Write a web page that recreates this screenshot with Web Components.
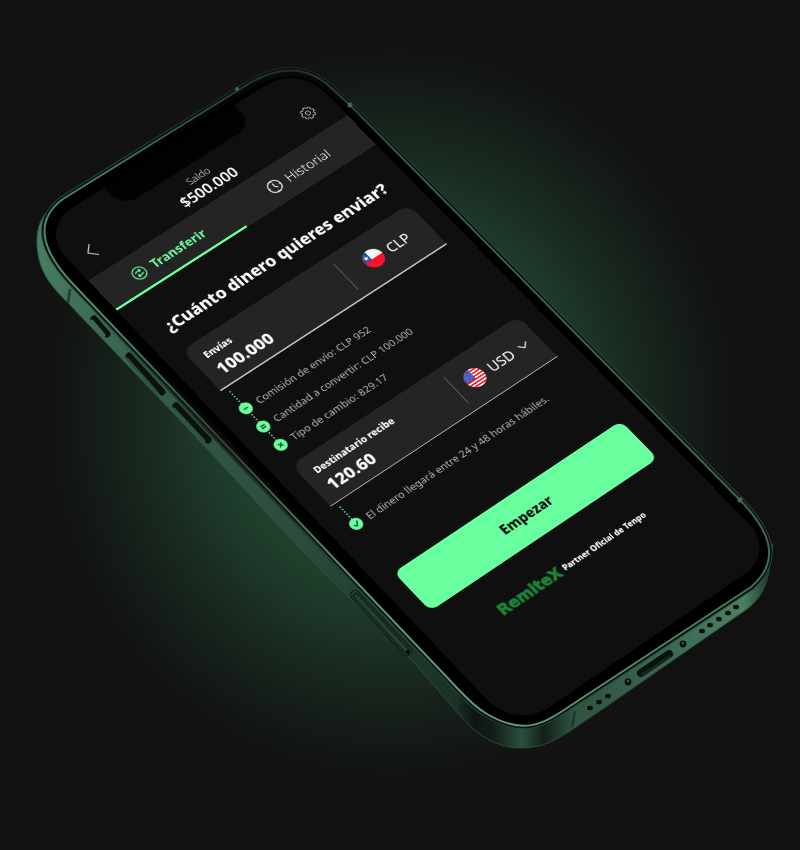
<!DOCTYPE html>
<html lang="es">
<head>
<meta charset="utf-8">
<meta name="viewport" content="width=device-width, initial-scale=1">
<title>Remesas</title>
<style>
  body { margin: 0; background: #111; font-family: "Noto Sans", "Open Sans", sans-serif; }
</style>
</head>
<body>
<phone-stage>
  <phone-body></phone-body>
  <tilted-plane corners="39,229 298,65 777,552 516,730">
    <app-screen>
      <app-header slot="header" label="Saldo" amount="$500.000"></app-header>
      <app-tabs slot="tabs"></app-tabs>
      <h1 slot="title">¿Cuánto dinero quieres enviar?</h1>
      <money-card label="Envías" amount="100.000" line="2px">
        <flag-icon slot="flag" country="cl"></flag-icon>
        <span slot="currency">CLP</span>
      </money-card>
      <step-list>
        <step-item icon="minus">Comisión de envío: CLP 952</step-item>
        <step-item icon="equal">Cantidad a convertir: CLP 100.000</step-item>
        <step-item icon="times">Tipo de cambio: 829.17</step-item>
      </step-list>
      <money-card label="Destinatario recibe" amount="120.60" line="1px">
        <flag-icon slot="flag" country="us"></flag-icon>
        <currency-select slot="currency"></currency-select>
      </money-card>
      <step-list>
        <step-item icon="check">El dinero llegará entre 24 y 48 horas hábiles.</step-item>
      </step-list>
      <main-button slot="action">Empezar</main-button>
      <partner-line slot="footer">Partner Oficial de Tenpo</partner-line>
    </app-screen>
  </tilted-plane>
</phone-stage>

<script>
function define(name, html, extra) {
  const t = document.createElement('template');
  t.innerHTML = html;
  customElements.define(name, class extends HTMLElement {
    constructor() {
      super();
      this.attachShadow({ mode: 'open' }).append(t.content.cloneNode(true));
    }
    connectedCallback() { if (extra) extra(this, this.shadowRoot); }
  });
}

/* Backdrop with the green glow; its box keeps the scene's proportions. */
define('phone-stage', `<style>
  :host { display: block; position: relative; width: 100%; aspect-ratio: 800 / 850; overflow: hidden;
    background: radial-gradient(ellipse 46% 46% at 49% 48.5%, #24523a 0%, #21432f 40%, #1d3728 54%, #192a20 66%, #151d18 80%, #121412 92%, #111 100%); }
</style><slot></slot>`);

/* Metal frame, side keys, ports and the black glass. */
define('phone-body', `<style>
  :host { display: block; position: absolute; inset: 0; }
  svg { display: block; width: 100%; height: 100%; }
</style>
<svg viewBox="0 0 800 850" aria-hidden="true">
  <defs>
    <linearGradient id="side" gradientUnits="userSpaceOnUse" x1="36" y1="0" x2="772" y2="0">
      <stop offset="0" stop-color="#487e60"/><stop offset=".06" stop-color="#3f7055"/>
      <stop offset=".2" stop-color="#315944"/>
      <stop offset=".36" stop-color="#2b4c3b"/><stop offset=".5" stop-color="#1f382b"/>
      <stop offset=".57" stop-color="#1c3127"/><stop offset=".595" stop-color="#0e1512"/>
      <stop offset=".62" stop-color="#121d18"/><stop offset=".66" stop-color="#2c4f3c"/>
      <stop offset=".69" stop-color="#141f19"/><stop offset=".73" stop-color="#2f5440"/>
      <stop offset=".85" stop-color="#396550"/><stop offset=".96" stop-color="#4b8163"/>
      <stop offset="1" stop-color="#1c3226"/>
    </linearGradient>
    <linearGradient id="rim" gradientUnits="userSpaceOnUse" x1="250" y1="560" x2="480" y2="240">
      <stop offset="0" stop-color="#5f9a79"/><stop offset=".35" stop-color="#528868"/>
      <stop offset="1" stop-color="#355d46"/>
    </linearGradient>
    <linearGradient id="fade" gradientUnits="userSpaceOnUse" x1="120" y1="130" x2="420" y2="180">
      <stop offset="0" stop-color="#111" stop-opacity="0"/><stop offset=".5" stop-color="#111" stop-opacity=".6"/>
      <stop offset="1" stop-color="#111" stop-opacity="0"/>
    </linearGradient>
    <path id="face" d="M63 199 L250 83 C276 68 304 64 329 86 L350 105 L740 500 C774 535 779 563 751 587 L573 704 C541 726 523 735 487 714 Q475 707 460 691 L73 284 C38 247 36 219 63 199Z"/>
  </defs>
  <path fill="url(#side)" stroke="#2c4a3a" stroke-width="1" d="M60 200 C40 214 36 228 37 247 C39 272 50 285 67 302 L177 417 L300 549 L410 658 L457 712 C478 736 496 748 522 748 C545 747 556 740 570 731 L607 706 L740 614 C761 601 768 585 770 563 L773 545 L740 520 L520 720 L80 290Z"/>
  <use href="#face" fill="none" stroke="#274637" stroke-width="7"/>
  <use href="#face" fill="none" stroke="#08100c" stroke-width="5"/>
  <use href="#face" fill="#000" stroke="url(#rim)" stroke-width="2"/>
  <use href="#face" fill="none" stroke="url(#fade)" stroke-width="10"/>
  <g fill="none" stroke="#1d3327" stroke-width="3">
    <path d="M70 289L68 303M575 711L572 727M458 697L456 710" opacity=".8"/>
  </g>
  <g fill="#3f6b53"><circle cx="237" cy="89" r="2"/><circle cx="350" cy="105" r="2.500"/><circle cx="740" cy="500" r="2.500"/></g>
  <g fill="none" stroke-linecap="round">
    <path stroke="#0a120e" stroke-width="7" d="M94 319L107 334"/>
    <path stroke="#3c6b51" stroke-width="3" d="M92 321L104 335"/>
    <path stroke="#0a120e" stroke-width="7" d="M129 356L162 392M176 406L208 440"/>
    <path stroke="#2d5240" stroke-width="3" d="M127 359L158 394M174 409L204 441"/>
    <path stroke="#0d1812" stroke-width="10" d="M355 595L407 651"/>
    <path stroke="#244033" stroke-width="8" d="M355 595L407 651"/>
    <path stroke="#0d1812" stroke-width="6" d="M356 596L406 650"/>
    <path stroke="#244033" stroke-width="4" d="M356 596L406 650"/>
    <path stroke="#0a120e" stroke-width="8" d="M641 673L669 654"/>
    <path stroke="#16251d" stroke-width="3" d="M642 675L669 657"/>
  </g>
  <circle cx="408" cy="652" r="2" fill="#050806"/>
  <g fill="#08100c">
    <ellipse cx="590" cy="708" rx="3" ry="2.3"/><ellipse cx="599" cy="702" rx="3" ry="2.3"/><ellipse cx="608" cy="696" rx="3" ry="2.3"/>
    <circle cx="628" cy="682" r="3.4"/><circle cx="683" cy="644" r="3.4"/>
    <ellipse cx="702" cy="631" rx="3" ry="2.3"/><ellipse cx="710" cy="625" rx="3" ry="2.3"/><ellipse cx="719" cy="619" rx="3" ry="2.3"/><ellipse cx="728" cy="613" rx="3" ry="2.3"/><ellipse cx="736" cy="607" rx="3" ry="2.3"/>
  </g>
  <g fill="#3b654f"><circle cx="628" cy="681" r="1.2"/><circle cx="683" cy="643" r="1.2"/></g>
</svg>`);

/* Lays its content on a plane seen in perspective. The corners (top left,
   top right, bottom right, bottom left) are given on the 800-wide stage. */
define('tilted-plane', `<style>
  :host { display: block; position: absolute; left: 0; top: 0; width: 390px; height: 844px; transform-origin: 0 0; }
</style><slot></slot>`, (el) => {
  const place = () => {
    const k = el.parentElement.clientWidth / 800;
    const [p0, p1, p2, p3] = el.getAttribute('corners').split(' ').map(p => p.split(',').map(n => n * k));
    const dx1 = p1[0] - p2[0], dx2 = p3[0] - p2[0], sx = p0[0] - p1[0] + p2[0] - p3[0];
    const dy1 = p1[1] - p2[1], dy2 = p3[1] - p2[1], sy = p0[1] - p1[1] + p2[1] - p3[1];
    const det = dx1 * dy2 - dx2 * dy1;
    const g = (sx * dy2 - dx2 * sy) / det, h = (dx1 * sy - sx * dy1) / det;
    const w = 390, t = 844;
    el.style.transform = `matrix3d(${[
      (p1[0] - p0[0] + g * p1[0]) / w, (p1[1] - p0[1] + g * p1[1]) / w, 0, g / w,
      (p3[0] - p0[0] + h * p3[0]) / t, (p3[1] - p0[1] + h * p3[1]) / t, 0, h / t,
      0, 0, 1, 0, p0[0], p0[1], 0, 1].map(n => n.toFixed(9)).join(',')})`;
  };
  place();
  new ResizeObserver(place).observe(el.parentElement);
});

define('app-screen', `<style>
  :host { display: flex; flex-direction: column; height: 100%; box-sizing: border-box; position: relative;
    overflow: hidden; border-radius: 48px; background: #0f0f0f; color: #fff; }
  .notch { position: absolute; left: 50%; top: 0; width: 196px; height: 34px; margin-left: -98px;
    background: #020202; border-radius: 0 0 22px 22px; }
  .body { display: flex; flex-direction: column; padding: 0 25px; }
  ::slotted(h1) { margin: 38px 0 21px; font-size: 21px; line-height: 28px; font-weight: 800; text-align: center; white-space: nowrap; }
</style>
<div class="notch"></div>
<slot name="header"></slot><slot name="tabs"></slot>
<div class="body"><slot name="title"></slot><slot></slot><slot name="action"></slot><slot name="footer"></slot></div>`);

define('app-header', `<style>
  :host { display: grid; grid-template-columns: 56px 1fr 56px; height: 90px; align-items: end; }
  button { all: unset; height: 60px; display: grid; place-items: center; }
  button:last-of-type { padding-right: 14px; }
  svg { width: 20px; height: 20px; fill: none; stroke: #ddd; stroke-width: 1; }
  .mid { display: flex; flex-direction: column; align-items: center; padding-bottom: 6px; }
  .label { font-size: 13px; line-height: 16px; font-weight: 300; color: #ddd; }
  .amount { font-size: 19px; line-height: 24px; font-weight: 600; }
</style>
<button aria-label="Volver"><svg viewBox="0 0 20 20"><path stroke-width="1.3" d="M15 1L6 10L15 19"/></svg></button>
<div class="mid"><span class="label"></span><span class="amount"></span></div>
<button aria-label="Ajustes"><svg viewBox="0 0 20 20"><circle cx="10" cy="10" r="3"/><path d="M8.6 1.5h2.8l.6 2.1 1.2.5 1.9-1.1 2 2-1.1 1.9.5 1.2 2.1.6v2.6l-2.1.6-.5 1.2 1.1 1.9-2 2-1.9-1.1-1.2.5-.6 2.1H8.6L8 16.400l-1.2-.5L4.900 17l-2-2L4 13.100l-.5-1.200-2.100-.6V8.700l2.100-.6.5-1.200L2.900 5l2-2 1.900 1.100L8 3.600z" stroke-linejoin="round"/></svg></button>`,
(el, r) => {
  r.querySelector('.label').textContent = el.getAttribute('label');
  r.querySelector('.amount').textContent = el.getAttribute('amount');
});

define('app-tabs', `<style>
  :host { display: grid; grid-template-columns: 1fr 1fr; height: 52px; background: #242424; }
  button { all: unset; box-sizing: border-box; display: flex; justify-content: center; align-items: center; gap: 8px; padding-top: 4px;
    font-size: 17px; line-height: 22px; font-weight: 300; color: #fff; border-bottom: 3px solid transparent; }
  .on { color: #69ff9f; font-size: 16px; font-weight: 700; border-color: #69ff9f; }
  svg { width: 20px; height: 20px; fill: none; stroke: currentColor; stroke-width: 1.4; }
</style>
<button class="on" role="tab" aria-selected="true"><svg viewBox="0 0 20 20"><circle cx="10" cy="10" r="8.500"/><path d="M6 9q0-2 2-2h5M11 4.800L13.300 7L11 9.200M14 11q0 2-2 2H7M9 10.800L6.700 13L9 15.200"/></svg>Transferir</button>
<button role="tab" aria-selected="false"><svg viewBox="0 0 20 20"><circle cx="10" cy="10" r="8.500"/><path d="M10 5v5l3 3M10 2v1.500M10 16.500V18M2 10h1.500M16.500 10H18"/></svg>Historial</button>`);

define('money-card', `<style>
  :host { display: grid; grid-template-columns: 1fr 124px; height: 70px; box-sizing: border-box;
    background: #242424; border-radius: 14px 14px 0 0; border-bottom: var(--line, 1px) solid #bbb; }
  label { display: flex; flex-direction: column; justify-content: center; gap: 1px; padding: 5px 0 0 16px; font-size: 12px; line-height: 18px; font-weight: 800; min-width: 0; }
  input { all: unset; width: 100%; font-size: 21px; line-height: 28px; height: 28px; font-weight: 800; color: #fff; }
  .cur { display: flex; align-items: center; justify-content: center; gap: 8px; align-self: center; height: 44px;
    border-left: 1px solid #666; font-size: 18px; line-height: 24px; font-weight: 400; }
</style>
<label><span></span><input type="text" inputmode="decimal"></label>
<div class="cur"><slot name="flag"></slot><slot name="currency"></slot></div>`,
(el, r) => {
  el.style.setProperty('--line', el.getAttribute('line'));
  r.querySelector('span').textContent = el.getAttribute('label');
  r.querySelector('input').value = el.getAttribute('amount');
});

define('currency-select', `<style>
  :host { display: flex; align-items: center; gap: 8px; }
  select { appearance: none; border: 0; padding: 0; margin: 0; background: none; color: inherit; font: inherit; }
  svg { width: 14px; height: 14px; fill: none; stroke: #fff; stroke-width: 1.3; }
</style>
<select aria-label="Moneda"><option>USD</option></select>
<svg viewBox="0 0 14 14"><path d="M1 4L7 10L13 4"/></svg>`);

const FLAGS = {
  cl: '<path fill="#f4f4f4" d="M0 0h26v13H0z"/><path fill="#f5142b" d="M0 13h26v13H0z"/><path fill="#1d4bb5" d="M0 0h10v13H0z"/><path fill="#fff" d="M5.500 4.500l.9 2.600h2.600l-2.100 1.600.8 2.600-2.200-1.600-2.200 1.600.8-2.600L2 7.100h2.600z"/>',
  us: '<path fill="#fff" d="M0 0h26v26H0z"/><path stroke="#f5142b" stroke-width="2" d="M0 3h26M0 7h26M0 11h26M0 15h26M0 19h26M0 23h26"/><path fill="#3f51b5" d="M0 0h13v14H0z"/><path stroke="#cdd3f5" stroke-width=".8" stroke-dasharray="1 2" d="M2 4h11M3.500 6h10M2 8h11M3.500 10h10M2 12h11"/>'
};
define('flag-icon', `<style>
  :host { display: block; width: 26px; height: 26px; border-radius: 50%; overflow: hidden; }
  svg { display: block; width: 100%; height: 100%; }
</style><svg viewBox="0 0 26 26" aria-hidden="true"></svg>`,
(el, r) => { r.querySelector('svg').innerHTML = FLAGS[el.getAttribute('country')]; });

define('step-list', `<style>
  :host { display: flex; flex-direction: column; padding: 19px 0 13px; }
</style><slot></slot>`);

const STEPS = { minus: 'M5 8h6', equal: 'M5 6.500h6M5 9.500h6', times: 'M5.500 5.500l5 5M10.500 5.500l-5 5', check: 'M4.500 8l2.700 3L11.500 5' };
define('step-item', `<style>
  :host { display: flex; align-items: center; gap: 8px; height: 31px; font-size: 13px; font-weight: 400; color: #b4b4b4; white-space: nowrap; }
  svg { width: 16px; height: 16px; fill: none; stroke: #0c2a18; stroke-width: 1.4; overflow: visible; }
  .dots { stroke: #69ff9f; stroke-width: 2; stroke-dasharray: 0 4; stroke-linecap: round; }
</style>
<svg viewBox="0 0 16 16" aria-hidden="true"><path class="dots" d="M8 0v-16"/><circle cx="8" cy="8" r="8" fill="#69ff9f" stroke="none"/><path class="mark"/></svg><span><slot></slot></span>`,
(el, r) => {
  r.querySelector('.mark').setAttribute('d', STEPS[el.getAttribute('icon')]);
  if (!el.previousElementSibling) r.querySelector('.dots').setAttribute('d', 'M8 0v-23');
});

define('main-button', `<style>
  :host { display: block; padding-top: 47px; }
  button { display: block; width: 100%; height: 64px; border: 0; border-radius: 10px; background: #69ff9f; color: #0a0a0a;
    font: inherit; font-size: 17px; line-height: 24px; font-weight: 800; }
</style><button><slot></slot></button>`);

define('partner-line', `<style>
  :host { display: flex; align-items: center; justify-content: center; gap: 5px; padding-top: 33px; line-height: 28px;
    font-size: 10px; font-weight: 800; white-space: nowrap; }
  .logo { font-family: "DejaVu Sans", sans-serif; font-size: 19px; font-weight: 700; color: #1c8039; -webkit-text-stroke: 1px #1c8039; }
</style><span class="logo">RemiteX</span><span><slot></slot></span>`);
</script>
</body>
</html>
